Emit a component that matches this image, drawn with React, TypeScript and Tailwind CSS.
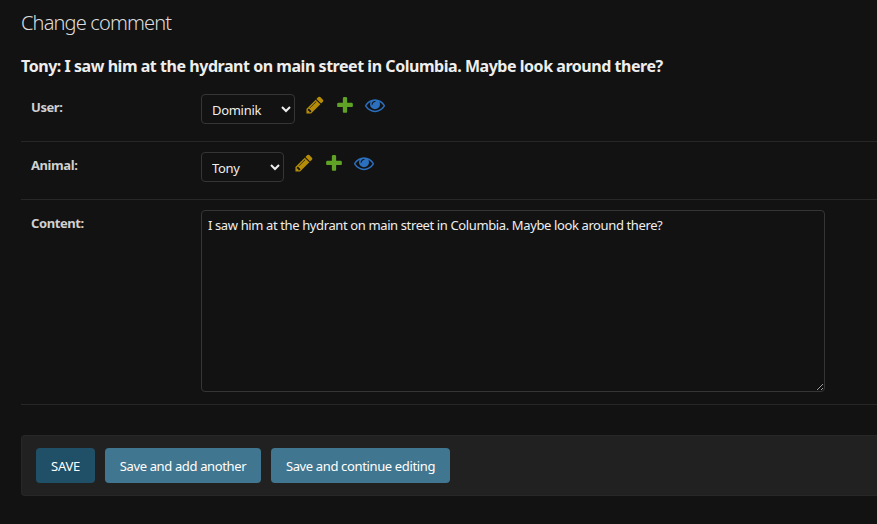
import React from 'react';

function PencilIcon() {
  return (
    <svg className="size-5" viewBox="0 0 1792 1792" fill="#b48c08">
      <path d="M491 1536l91-91-235-235-91 91v107h128v128h107zm523-928q0-22-22-22-10 0-17 7l-542 542q-7 7-7 17 0 22 22 22 10 0 17-7l542-542q7-7 7-17zm-54-192l416 416-832 832h-416v-416zm683 96q0 53-37 90l-166 166-416-416 166-165q36-38 90-38 53 0 91 38l235 234q37 39 37 91z" />
    </svg>
  );
}

function PlusIcon() {
  return (
    <svg className="size-5" viewBox="0 0 1792 1792" fill="#5fa225">
      <path d="M1600 796v192q0 40-28 68t-68 28h-416v416q0 40-28 68t-68 28h-192q-40 0-68-28t-28-68v-416h-416q-40 0-68-28t-28-68v-192q0-40 28-68t68-28h416v-416q0-40 28-68t68-28h192q40 0 68 28t28 68v416h416q40 0 68 28t28 68z" />
    </svg>
  );
}

function EyeIcon() {
  return (
    <svg className="size-5" viewBox="0 0 1792 1792" fill="#2b70bf">
      <path d="M1664 960q-152-236-381-353 61 104 61 225 0 185-131.5 316.5t-316.5 131.5-316.5-131.5-131.5-316.5q0-121 61-225-229 117-381 353 133 205 333.5 326.5t434.5 121.5 434.5-121.5 333.5-326.5zm-720-384q0-20-14-34t-34-14q-125 0-214.5 89.5t-89.5 214.5q0 20 14 34t34 14 34-14 14-34q0-86 61-147t147-61q20 0 34-14t14-34zm848 384q0 34-20 69-140 230-376.5 368.5t-499.5 138.5-499.5-139-376.5-368q-20-35-20-69t20-69q140-229 376.5-368t499.5-139 499.5 139 376.5 368q20 35 20 69z" />
    </svg>
  );
}

function RelatedField({ label, value, width }: { label: string; value: string; width: string }) {
  return (
    <div className="flex h-[58px] items-start border-b border-[#272727] pt-[10px] pl-[10px]">
      <label className="w-[170px] pt-[3px] text-[13px] leading-5 font-bold tracking-[-0.42px] text-[#d0d0d0]">{label}</label>
      <select
        className={`${width} h-[30px] rounded border border-[#353535] bg-[#121212] pt-[2px] pl-[6px] text-[13px] tracking-[-0.3px] text-[#eeeeee] scheme-dark`}
        defaultValue={value}
      >
        <option>{value}</option>
      </select>
      <div className="ml-[10px] flex gap-[10px] pt-px">
        <PencilIcon />
        <PlusIcon />
        <EyeIcon />
      </div>
    </div>
  );
}

export default function App() {
  return (
    <div className="h-[524px] w-[877px] overflow-hidden bg-[#121212] pt-[10px] pl-[21px] font-['Noto_Sans',sans-serif] text-[#eeeeee]">
      <h1 className="h-[46px] text-[20px] leading-[26px] font-light tracking-[-0.85px] text-[#dddddd]">
        <span>Change comment</span>
      </h1>
      <h2 className="h-[28px] text-[16px] leading-[20px] font-bold tracking-[-0.46px] whitespace-nowrap">
        <span>Tony: I saw him at the hydrant on main street in Columbia. Maybe look around there?</span>
      </h2>
      <form>
        <RelatedField label="User:" value="Dominik" width="w-[94px]" />
        <RelatedField label="Animal:" value="Tony" width="w-[83px]" />
        <div className="flex h-[205px] items-start border-b border-[#272727] pt-[10px] pl-[10px]">
          <label className="w-[170px] pt-[3px] text-[13px] leading-5 font-bold tracking-[-0.42px] text-[#d0d0d0]">Content:</label>
          <textarea
            className="h-[182px] w-[624px] rounded border border-[#353535] bg-[#121212] px-[6px] py-[4px] text-[13px] leading-[20px] tracking-[-0.38px] scheme-dark"
            defaultValue="I saw him at the hydrant on main street in Columbia. Maybe look around there?"
          />
        </div>
        <div className="mt-[30px] flex h-[61px] items-center gap-[10px] rounded-l border border-r-0 border-[#272727] bg-[#212121] pl-[14px] text-[13px] text-white">
          <button type="button" className="h-[35px] w-[59px] rounded bg-[#205067] pt-[2px] tracking-[-0.3px]">SAVE</button>
          <button type="button" className="h-[35px] w-[156px] rounded bg-[#417690] pt-[2px] tracking-[-0.36px] whitespace-nowrap">Save and add another</button>
          <button type="button" className="h-[35px] w-[179px] rounded bg-[#417690] pt-[2px] tracking-[-0.36px] whitespace-nowrap">Save and continue editing</button>
        </div>
      </form>
    </div>
  );
}
